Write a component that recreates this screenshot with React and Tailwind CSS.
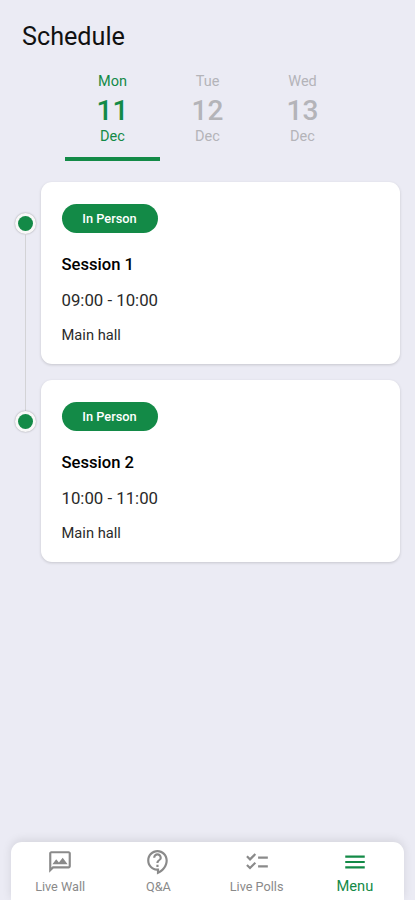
import React from 'react';
import { MdChecklist, MdMenu, MdOutlineContactSupport, MdOutlineMms } from 'react-icons/md';

const DAYS = [
  { weekday: 'Mon', day: '11', month: 'Dec', active: true },
  { weekday: 'Tue', day: '12', month: 'Dec' },
  { weekday: 'Wed', day: '13', month: 'Dec' },
];

const SESSIONS = [
  { title: 'Session 1', time: '09:00 - 10:00', place: 'Main hall', type: 'In Person' },
  { title: 'Session 2', time: '10:00 - 11:00', place: 'Main hall', type: 'In Person' },
];

const NAV_ITEMS = [
  { label: 'Live Wall', icon: MdOutlineMms },
  { label: 'Q&A', icon: MdOutlineContactSupport },
  { label: 'Live Polls', icon: MdChecklist },
  { label: 'Menu', icon: MdMenu, active: true },
];

function DayTab({ item }) {
  return (
    <button
      className={`flex w-[95px] flex-col items-center border-b-4 pb-[10px] text-[14.5px] leading-5 ${
        item.active ? 'border-[#138a47] text-[#138a47]' : 'border-transparent text-[#b4b4b9]'
      }`}
    >
      <span>{item.weekday}</span>
      <span className="mt-[3px] text-[28px] leading-[32px] font-medium">{item.day}</span>
      <span>{item.month}</span>
    </button>
  );
}

function SessionRow({ session, first, last }) {
  return (
    <li className="flex h-[198px]">
      {/* Timeline marker and connector */}
      <div className="flex w-[27px] flex-col items-center">
        <div className={`h-[31px] w-px ${first ? '' : 'bg-[#d3d3d6]'}`} />
        <div className="flex size-[21px] shrink-0 items-center justify-center rounded-full bg-[#f8f8f8] shadow-[0_0_2px_rgba(0,0,0,0.35)]">
          <div className="size-[15px] rounded-full bg-[#138a47]" />
        </div>
        {!last && <div className="w-px flex-1 bg-[#d3d3d6]" />}
      </div>

      <div className="ml-[1.5px] flex h-[182px] flex-1 flex-col items-start rounded-[11px] bg-white px-[21px] pt-[22px] text-[#2a2a2a] shadow-[0_1px_3px_rgba(0,0,0,0.16)]">
        <span className="flex h-[29px] w-24 items-center justify-center rounded-full bg-[#138a47] text-[12.8px] font-medium text-white">
          {session.type}
        </span>
        <h2 className="mt-5 text-[16.6px] leading-6 font-medium text-black">{session.title}</h2>
        <p className="mt-[11px] text-[16.8px] leading-6">{session.time}</p>
        <p className="mt-[11px] text-[14.7px] leading-6">{session.place}</p>
      </div>
    </li>
  );
}

function NavItem({ item }) {
  const Icon = item.icon;
  return (
    <button
      className={`flex flex-1 flex-col items-center ${item.active ? 'text-[#138a47]' : 'text-[#8a8a8a]'}`}
    >
      <Icon className="size-[26px]" />
      <span className={item.active ? 'mt-0.5 text-[14.7px] leading-[18px]' : 'mt-[3px] text-[12.7px] leading-[18px]'}>
        {item.label}
      </span>
    </button>
  );
}

export default function App() {
  return (
    <div className="flex h-[900px] w-full flex-col overflow-hidden bg-[#ebebf4] font-[Roboto,sans-serif]">
      <h1 className="px-[22px] pt-[21px] text-[25.2px] leading-8 text-[#111]">Schedule</h1>

      <div className="mt-[19px] flex justify-center">
        {DAYS.map(item => (
          <DayTab key={item.day} item={item} />
        ))}
      </div>

      <ul className="mt-[21px] flex-1 pr-[15.5px] pl-3">
        {SESSIONS.map((session, i) => (
          <SessionRow
            key={session.title}
            session={session}
            first={i === 0}
            last={i === SESSIONS.length - 1}
          />
        ))}
      </ul>

      <nav className="mx-[11px] flex h-[58px] shrink-0 rounded-t-[11px] bg-white pt-[7px] shadow-[0_-2px_10px_rgba(0,0,0,0.1)]">
        {NAV_ITEMS.map(item => (
          <NavItem key={item.label} item={item} />
        ))}
      </nav>
    </div>
  );
}
